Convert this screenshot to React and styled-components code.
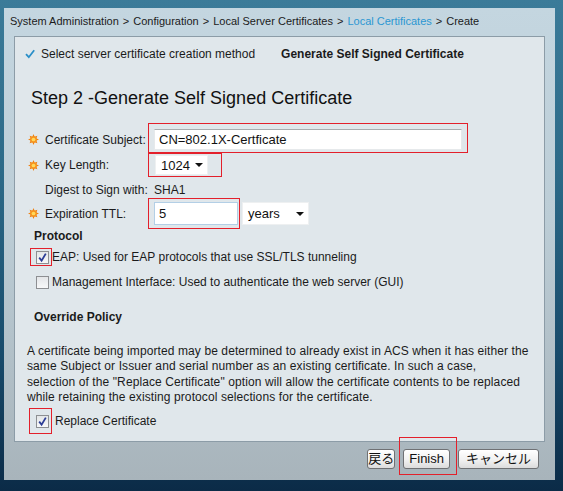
import React from 'react';
import styled, { createGlobalStyle } from 'styled-components';

const GlobalStyle = createGlobalStyle`
  html, body {
    margin: 0;
    padding: 0;
  }
  body {
    height: 491px;
    overflow: hidden;
    background: linear-gradient(180deg, #3b7b99 0%, #2c6a88 35%, #184b6b 72%, #0b2b47 100%);
    font-family: "Liberation Sans", Arial, "Noto Sans CJK JP", sans-serif;
    font-size: 12px;
    color: #1b1b1b;
  }
`;

const Frame = styled.div`
  box-sizing: border-box;
  width: 551px;
  height: 472px;
  margin: 8px 0 0 4px;
  padding: 6px 10px 0 6px;
  display: flex;
  flex-direction: column;
  background: linear-gradient(180deg, #c4d6e0 0%, #bccdd6 45%, #a8b4bb 100%);
`;

const Breadcrumb = styled.div`
  display: flex;
  gap: 4px;
  font-size: 11px;
  line-height: 14px;
  white-space: nowrap;
  color: #1b1b1b;
`;

const Crumb = styled.span`
  color: ${({ $link }) => ($link ? '#2b97d2' : '#1b1b1b')};
`;

const Panel = styled.div`
  box-sizing: border-box;
  width: 531px;
  height: 406px;
  margin: 8px 0 0 4px;
  border: 1px solid #8c9ca7;
  background: #e0e7eb;
  display: flex;
  flex-direction: column;
`;

const StepBar = styled.div`
  display: flex;
  align-items: center;
  height: 14px;
  margin-top: 10px;
  padding-left: 10px;
  white-space: nowrap;
`;

const StepDone = styled.span`
  margin-left: 6px;
`;

const StepCurrent = styled.span`
  margin-left: 26px;
  font-weight: bold;
`;

const Heading = styled.h2`
  margin: 26px 0 0 16px;
  font-size: 18px;
  line-height: 22px;
  font-weight: normal;
  color: #111;
`;

const Form = styled.div`
  display: flex;
  flex-direction: column;
  padding-left: 13px;
`;

const Row = styled.div`
  display: flex;
  align-items: center;
  height: ${({ $h }) => $h}px;
  margin-top: ${({ $mt }) => $mt}px;
`;

const GearSlot = styled.span`
  display: inline-flex;
  width: 11px;
  height: 11px;
  margin-right: 6px;
`;

const Label = styled.span`
  width: 109px;
  flex: none;
  white-space: nowrap;
`;

const Mark = styled.span`
  position: relative;
  display: inline-flex;
  margin-left: ${({ $ml }) => $ml || 0}px;
  &::after {
    content: '';
    position: absolute;
    top: -${({ $t }) => $t}px;
    right: -${({ $r }) => $r}px;
    bottom: -${({ $b }) => $b}px;
    left: -${({ $l }) => $l}px;
    border: 1px solid #e3202b;
    pointer-events: none;
  }
`;

const TextInput = styled.div`
  box-sizing: border-box;
  width: ${({ $w }) => $w}px;
  height: ${({ $h }) => $h}px;
  padding-left: 4px;
  display: flex;
  align-items: center;
  background: #fff;
  border: 1px solid ${({ $focus }) => ($focus ? '#b3cfe6' : '#e6e9eb')};
  border-top-color: ${({ $focus }) => ($focus ? '#b3cfe6' : '#a9acae')};
  font-size: 13px;
  color: #111;
`;

const Select = styled.div`
  box-sizing: border-box;
  width: ${({ $w }) => $w}px;
  height: ${({ $h }) => $h}px;
  margin-left: ${({ $ml }) => $ml || 0}px;
  padding: 0 4px 0 5px;
  display: flex;
  align-items: center;
  justify-content: space-between;
  background: #fff;
  border: 1px solid #eef0f1;
  font-size: 13px;
  color: #111;
`;

const Arrow = styled.span`
  width: 0;
  height: 0;
  border-left: 4px solid transparent;
  border-right: 4px solid transparent;
  border-top: 4px solid #111;
`;

const Section = styled.div`
  margin: ${({ $mt }) => $mt}px 0 0 19px;
  font-weight: bold;
  line-height: 14px;
`;

const CheckRow = styled.label`
  display: flex;
  align-items: center;
  height: 14px;
  margin-top: ${({ $mt }) => $mt}px;
  padding-left: 21px;
  white-space: nowrap;
`;

const Box = styled.span`
  box-sizing: border-box;
  width: 13px;
  height: 13px;
  display: inline-flex;
  align-items: center;
  justify-content: center;
  border: 1px solid #8d8f92;
  background: linear-gradient(180deg, #e4e6e8 0%, #f7f8f9 100%);
`;

const CheckText = styled.span`
  margin-left: ${({ $ml }) => $ml || 3}px;
`;

const Paragraph = styled.p`
  margin: 20px 0 0 12px;
  line-height: 15.3px;
  letter-spacing: 0.1px;
  white-space: nowrap;
`;

const ButtonBar = styled.div`
  display: flex;
  justify-content: flex-end;
  gap: 8px;
  margin-top: 7px;
  padding-right: 6px;
`;

const Button = styled.button`
  box-sizing: border-box;
  height: 20px;
  padding: 0 ${({ $px }) => $px}px;
  border: 1px solid #6f7174;
  border-radius: 3px;
  background: linear-gradient(180deg, #ffffff 0%, #f1f1f1 55%, #dcdcdc 100%);
  font-family: "Liberation Sans", Arial, "Noto Sans CJK JP", sans-serif;
  font-size: 13px;
  line-height: 18px;
  color: #111;
  cursor: pointer;
`;

const Gear = () => (
  <svg width="11" height="11" viewBox="0 0 10 10">
    <polygon
      points="5,0 6,2.4 8.5,1.5 7.6,4 10,5 7.6,6 8.5,8.5 6,7.6 5,10 4,7.6 1.5,8.5 2.4,6 0,5 2.4,4 1.5,1.5 4,2.4"
      fill="#ee7f0e"
    />
    <circle cx="5" cy="5" r="3" fill="#f7941d" />
    <circle cx="5" cy="5" r="1.7" fill="#ffd85a" />
  </svg>
);

const StepCheck = () => (
  <svg width="10" height="10" viewBox="0 0 10 10">
    <path d="M1 5.2 L3.8 8.2 L9.2 1.2" fill="none" stroke="#2a8fc8" strokeWidth="1.8" />
  </svg>
);

const Checkbox = ({ checked }) => (
  <Box>
    {checked && (
      <svg width="11" height="11" viewBox="0 0 11 11">
        <path d="M2.2 5.6 L4.6 8.6 L8.8 1.6" fill="none" stroke="#2c3d96" strokeWidth="1.8" />
      </svg>
    )}
  </Box>
);

export default function App() {
  return (
    <>
      <GlobalStyle />
      <Frame>
        <Breadcrumb>
          <Crumb>System Administration</Crumb>
          <Crumb>&gt;</Crumb>
          <Crumb>Configuration</Crumb>
          <Crumb>&gt;</Crumb>
          <Crumb>Local Server Certificates</Crumb>
          <Crumb>&gt;</Crumb>
          <Crumb $link>Local Certificates</Crumb>
          <Crumb>&gt;</Crumb>
          <Crumb>Create</Crumb>
        </Breadcrumb>

        <Panel>
          <StepBar>
            <StepCheck />
            <StepDone>Select server certificate creation method</StepDone>
            <StepCurrent>Generate Self Signed Certificate</StepCurrent>
          </StepBar>

          <Heading>Step 2 -Generate Self Signed Certificate</Heading>

          <Form>
            <Row $h={21} $mt={20}>
              <GearSlot><Gear /></GearSlot>
              <Label>Certificate Subject:</Label>
              <Mark $t={6} $r={6} $b={3} $l={6}>
                <TextInput $w={308} $h={21}>CN=802.1X-Certficate</TextInput>
              </Mark>
            </Row>
            <Row $h={20} $mt={5}>
              <GearSlot><Gear /></GearSlot>
              <Label>Key Length:</Label>
              <Mark $t={2} $r={14} $b={2} $l={7} $ml={1}>
                <Select $w={53} $h={20}>
                  1024
                  <Arrow />
                </Select>
              </Mark>
            </Row>
            <Row $h={14} $mt={8}>
              <GearSlot />
              <Label>Digest to Sign with:</Label>
              <span>SHA1</span>
            </Row>
            <Row $h={23} $mt={5}>
              <GearSlot><Gear /></GearSlot>
              <Label>Expiration TTL:</Label>
              <Mark $t={4} $r={2} $b={4} $l={6}>
                <TextInput $w={84} $h={23} $focus>5</TextInput>
              </Mark>
              <Select $w={67} $h={23} $ml={4}>
                years
                <Arrow />
              </Select>
            </Row>
          </Form>

          <Section $mt={4}>Protocol</Section>
          <CheckRow $mt={7}>
            <Mark $t={3} $r={3} $b={2} $l={6}>
              <Checkbox checked />
            </Mark>
            <CheckText>EAP: Used for EAP protocols that use SSL/TLS tunneling</CheckText>
          </CheckRow>
          <CheckRow $mt={11}>
            <Checkbox />
            <CheckText>Management Interface: Used to authenticate the web server (GUI)</CheckText>
          </CheckRow>

          <Section $mt={21}>Override Policy</Section>
          <Paragraph>
            A certificate being imported may be determined to already exist in ACS when it has either the
            <br />
            same Subject or Issuer and serial number as an existing certificate. In such a case,
            <br />
            selection of the "Replace Certificate" option will allow the certificate contents to be replaced
            <br />
            while retaining the existing protocol selections for the certificate.
          </Paragraph>
          <CheckRow $mt={9}>
            <Mark $t={7} $r={3} $b={6} $l={7}>
              <Checkbox checked />
            </Mark>
            <CheckText $ml={6}>Replace Certificate</CheckText>
          </CheckRow>
        </Panel>

        <ButtonBar>
          <Button $px={0}>戻る</Button>
          <Mark $t={12} $r={7} $b={6} $l={4}>
            <Button $px={5}>Finish</Button>
          </Mark>
          <Button $px={7}>キャンセル</Button>
        </ButtonBar>
      </Frame>
    </>
  );
}
